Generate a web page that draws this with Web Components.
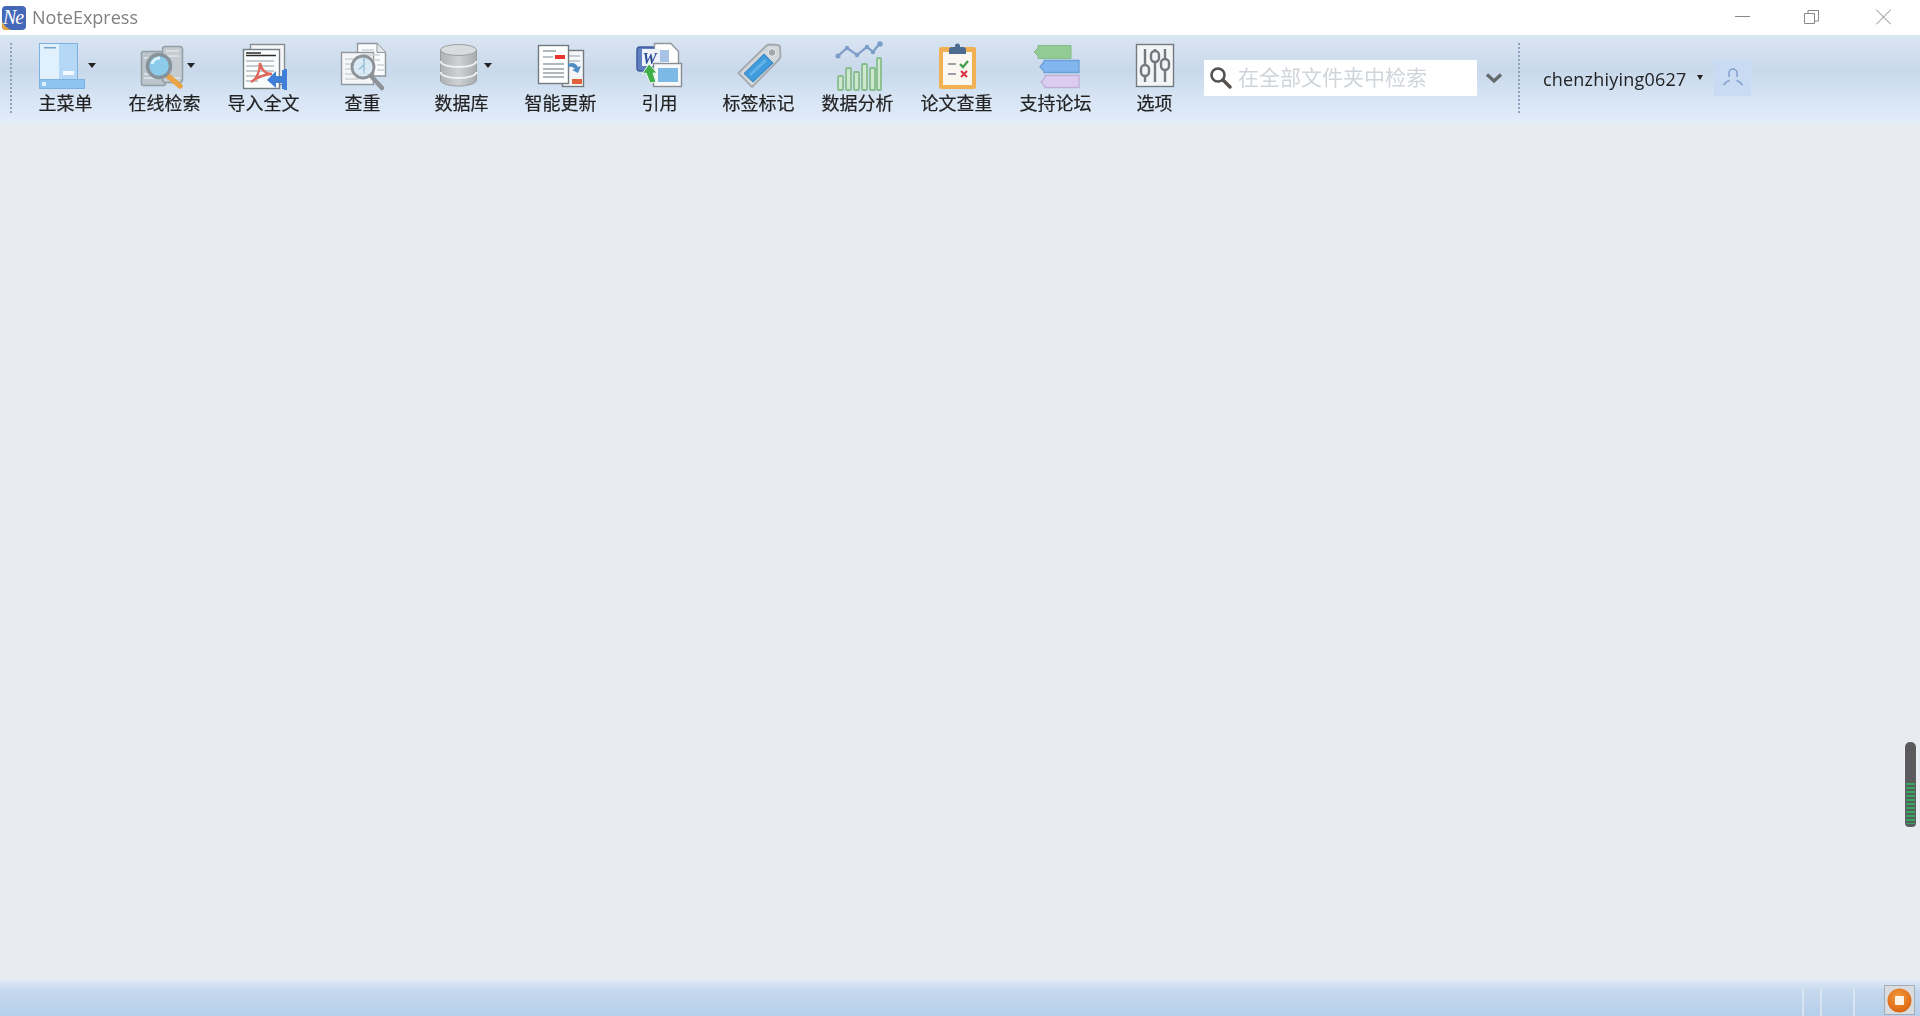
<!DOCTYPE html>
<html lang="zh">
<head>
<meta charset="utf-8">
<title>NoteExpress</title>
<style>
  html, body { margin: 0; height: 100%; }
  body { font-family: "Open Sans", "Noto Sans CJK SC", sans-serif; overflow: hidden; }
  ne-app { height: 1016px; }
  svg { display: block; }
</style>
</head>
<body>
<ne-app>
  <ne-titlebar slot="title" text="NoteExpress"></ne-titlebar>
  <ne-toolbar slot="tools">
    <ne-tool label="主菜单" caret>
      <svg viewBox="0 0 60 56" width="60" height="56">
        <rect x="3.500" y="5.500" width="38" height="37" fill="#b5d8f7" stroke="#7db2e0"/>
        <rect x="4" y="6" width="19" height="36" fill="#e0f0fd"/>
        <rect x="8" y="9" width="12" height="1.500" fill="#7aa4c8"/>
        <rect x="27" y="33" width="11" height="4" fill="#f2f9ff"/>
        <rect x="3.500" y="41.500" width="45" height="9" fill="#8ec4f0" stroke="#7db2e0"/>
        <rect x="6" y="44" width="4" height="4" fill="#dff0fd"/>
      </svg>
    </ne-tool>
    <ne-tool label="在线检索" caret>
      <svg viewBox="0 0 60 56" width="60" height="56">
        <rect x="6.500" y="13.500" width="24" height="34" rx="2" fill="#bcc5cb" stroke="#939da4" stroke-width="1.500"/>
        <rect x="27.500" y="8.500" width="20" height="36" rx="3" fill="#c4ccd2" stroke="#939da4" stroke-width="1.500"/>
        <path d="M31 13h13M31 18h13M37 40h8M9 20h8M9 40h14M9 36h6" stroke="#e0e5e8" stroke-width="1.500"/>
        <path d="M33 38l12 10" stroke="#e9a445" stroke-width="5.500" stroke-linecap="round"/>
        <circle cx="24" cy="28" r="11.500" fill="#8ccbea" stroke="#87929a" stroke-width="3.500"/>
        <path d="M17 26a8 8 0 0 1 8-6" stroke="#dcf3fc" stroke-width="3" fill="none"/>
      </svg>
    </ne-tool>
    <ne-tool label="导入全文">
      <svg viewBox="0 0 60 56" width="60" height="56">
        <rect x="16.500" y="6.500" width="34" height="40" fill="#f4f6f7" stroke="#868d93" stroke-width="1.400"/>
        <rect x="9.500" y="11.500" width="36" height="39" fill="#fbfcfc" stroke="#767d83" stroke-width="1.400"/>
        <path d="M12 15h15M12 17.500h30" stroke="#2b2b2b" stroke-width="1.500"/>
        <path d="M12 23h28M12 28h28M12 33h28M12 38h16M12 43h12" stroke="#b4bcc2" stroke-width="1.500"/>
        <path d="M17 44c6-3 9-11 9-19 1 7 6 11 12 11-6 0-14 3-21 8z" fill="none" stroke="#e0675c" stroke-width="2.400"/>
        <path d="M33 42l9-9v5h6v-6h2v-1h3v21h-3v-1h-2v-6h-6v5z" fill="#3f7fd8"/>
      </svg>
    </ne-tool>
    <ne-tool label="查重">
      <svg viewBox="0 0 60 56" width="60" height="56">
        <path d="M24.500 5.500H44l8.500 9V38h-28z" fill="#fafbfc" stroke="#8f969c" stroke-width="1.400"/>
        <path d="M44 5.500v9h8.500" fill="#e4e8eb" stroke="#8f969c"/>
        <rect x="8.500" y="14.500" width="32" height="32" fill="#f3f5f7" stroke="#8f969c" stroke-width="1.400"/>
        <path d="M12 21h25M12 26h25M12 31h25M12 36h25M12 41h14M29 12h12M29 17h18M29 22h18M44 27h7M44 32h7" stroke="#ccd2d6" stroke-width="1.300"/>
        <path d="M38 38l11 12" stroke="#8d9398" stroke-width="4.500" stroke-linecap="round"/>
        <circle cx="30" cy="29" r="11" fill="#d6e9f4" fill-opacity=".8" stroke="#8d9398" stroke-width="2.800"/>
        <path d="M31 20v15M26 31l5-4" stroke="#8ab8d4" stroke-width="1.200" fill="none"/>
      </svg>
    </ne-tool>
    <ne-tool label="数据库" caret>
      <svg viewBox="0 0 60 56" width="60" height="56">
        <defs><linearGradient id="db" x1="0" x2="1"><stop offset="0" stop-color="#aeb2b5"/><stop offset=".5" stop-color="#cfd2d4"/><stop offset="1" stop-color="#a8acaf"/></linearGradient></defs>
        <path d="M8.500 12v30c0 3.500 8 6 18 6s18-2.500 18-6V12z" fill="url(#db)" stroke="#9a9ea1"/>
        <ellipse cx="26.500" cy="12" rx="18" ry="5.500" fill="#d9dcde" stroke="#9a9ea1"/>
        <path d="M8.500 23c0 3.500 8 6 18 6s18-2.500 18-6M8.500 34c0 3.500 8 6 18 6s18-2.500 18-6" fill="none" stroke="#f0f1f2" stroke-width="1.800"/>
      </svg>
    </ne-tool>
    <ne-tool label="智能更新">
      <svg viewBox="0 0 60 56" width="60" height="56">
        <rect x="31.500" y="12.500" width="21" height="36" fill="#f4f6f8" stroke="#737b81" stroke-width="1.400"/>
        <rect x="41" y="41" width="10" height="5" fill="#e2603a"/>
        <path d="M35 18h14M35 23h14M35 28h8" stroke="#b8bfc5" stroke-width="1.300"/>
        <rect x="7.500" y="7.500" width="30" height="38" fill="#fff" stroke="#737b81" stroke-width="1.400"/>
        <path d="M12 13h13M12 26h21M12 31h21M12 35h21M12 39h21" stroke="#98a1a8" stroke-width="1.300"/>
        <path d="M12 19h10" stroke="#98a1a8" stroke-width="1.300"/>
        <rect x="24" y="17" width="10" height="4" fill="#e8362e"/>
        <path d="M37 26c4-2 8-1 10 3l3-1-3 7-6-3 3-1c-2-2-4-3-7-2z" fill="#4d8dc4"/>
      </svg>
    </ne-tool>
    <ne-tool label="引用">
      <svg viewBox="0 0 60 56" width="60" height="56">
        <rect x="7" y="9" width="26" height="24" rx="3" fill="#5f7fc0" stroke="#3f5c9e" stroke-width="1.500"/>
        <path d="M24.500 5.500H41l7.500 8V28h-24z" fill="#fff" stroke="#8f969c" stroke-width="1.400"/>
        <rect x="29" y="12" width="10" height="12" fill="#a7c4e6"/>
        <rect x="12" y="11" width="18" height="17" fill="#eef3fa"/>
        <text x="12.500" y="26" font-family="Liberation Serif, serif" font-style="italic" font-weight="700" font-size="16" fill="#2d4d96">W</text>
        <rect x="23.500" y="25.500" width="28" height="23" fill="#f5f7f9" stroke="#868d93" stroke-width="1.400"/>
        <rect x="28" y="30" width="20" height="14" fill="#7cb9e4"/>
        <path d="M19 26l8 9h-4l3 9-6 1-4-10-4 1z" fill="#3fae49" stroke="#e9f7ea"/>
      </svg>
    </ne-tool>
    <ne-tool label="标签标记">
      <svg viewBox="0 0 60 56" width="60" height="56">
        <path d="M9.500 35L37 8c1-1 2-1.500 3.500-1.500l8 .5c1.500 0 2.500 1 2.500 2.500l.5 9c0 1-.5 2-1.500 3L23 49z" fill="#d2d7db" stroke="#a3a9ae" stroke-width="1.800"/>
        <circle cx="43" cy="14.500" r="3.800" fill="#a0a6ab" stroke="#eef0f2"/>
        <path d="M15 35.500L35 16l9 9-20 19z" fill="#3f9bdc" stroke="#2f7fbc"/>
        <path d="M20 36l16-15 2 2-16 15z" fill="#62b3ea"/>
      </svg>
    </ne-tool>
    <ne-tool label="数据分析">
      <svg viewBox="0 0 60 56" width="60" height="56">
        <g fill="#cfe6cf" stroke="#86bd8c" stroke-width="1.800">
          <rect x="10" y="38" width="5" height="14" rx="1"/>
          <rect x="18" y="30" width="5" height="22" rx="1"/>
          <rect x="26" y="34" width="5" height="18" rx="1"/>
          <rect x="34" y="26" width="5" height="26" rx="1"/>
          <rect x="42" y="30" width="5" height="22" rx="1"/>
          <rect x="49" y="20" width="4" height="32" rx="1"/>
        </g>
        <path d="M10 18l9-8 10 7 10-8 6 5 7-9" fill="none" stroke="#7d9cc8" stroke-width="2.200"/>
        <g fill="#7d9cc8"><circle cx="10" cy="18" r="2.500"/><circle cx="19" cy="10" r="2.200"/><circle cx="29" cy="17" r="2.200"/><circle cx="39" cy="9" r="2.200"/><circle cx="45" cy="14" r="2.200"/><circle cx="52" cy="6" r="2.700"/></g>
      </svg>
    </ne-tool>
    <ne-tool label="论文查重">
      <svg viewBox="0 0 60 56" width="60" height="56">
        <rect x="12" y="9" width="37" height="42" rx="2" fill="#f1b053"/>
        <rect x="16" y="14" width="29" height="33" fill="#faf7f1"/>
        <path d="M22 11a3 3 0 0 1 3-2h3a3 3 0 0 1 5 0h3a3 3 0 0 1 3 2v5H22z" fill="#4d6a90"/>
        <circle cx="30.500" cy="8" r="2.500" fill="#4d6a90"/>
        <path d="M21 26h8M21 36h8" stroke="#9aa3aa" stroke-width="2"/>
        <path d="M33 26l3 3 5-6" fill="none" stroke="#3f9d4b" stroke-width="2.200"/>
        <path d="M34 33l6 6M40 33l-6 6" stroke="#d8384a" stroke-width="2.200"/>
      </svg>
    </ne-tool>
    <ne-tool label="支持论坛">
      <svg viewBox="0 0 60 56" width="60" height="56">
        <path d="M8 14l4-4V7.500h33v13H12V18z" fill="#93cb95" stroke="#84bb86"/>
        <path d="M14 29l4-5v-1.500h35v12H18V33z" fill="#82b6ee" stroke="#6a9fd8" stroke-width="1.300"/>
        <path d="M15 44l4-4v-2.500h34v12H19V48z" fill="#dcccf0" stroke="#bfb0d8" stroke-width="1.300"/>
      </svg>
    </ne-tool>
    <ne-tool label="选项">
      <svg viewBox="0 0 60 56" width="60" height="56">
        <rect x="11.500" y="6.500" width="37" height="42" fill="#f3f4f6" stroke="#737a80" stroke-width="1.400"/>
        <g fill="none" stroke="#72797f" stroke-width="2.400">
          <path d="M20 11v33M30 11v33M40 11v33"/>
          <rect x="16" y="27" width="8" height="11" rx="4" fill="#f3f4f6"/>
          <rect x="26" y="13" width="8" height="11" rx="4" fill="#f3f4f6"/>
          <rect x="36" y="21" width="8" height="11" rx="4" fill="#f3f4f6"/>
        </g>
      </svg>
    </ne-tool>
    <ne-search placeholder="在全部文件夹中检索"></ne-search>
    <ne-user name="chenzhiying0627"></ne-user>
  </ne-toolbar>
  <ne-statusbar slot="status"></ne-statusbar>
  <ne-meter slot="meter"></ne-meter>
</ne-app>

<script>
class NeApp extends HTMLElement {
  constructor() {
    super();
    this.attachShadow({ mode: 'open' }).innerHTML = `
      <style>
        :host { display: flex; flex-direction: column; position: relative; background: #e8ecf0; }
        main { flex: 1; }
      </style>
      <slot name="title"></slot>
      <slot name="tools"></slot>
      <main></main>
      <slot name="status"></slot>
      <slot name="meter"></slot>`;
  }
}

class NeTitlebar extends HTMLElement {
  connectedCallback() {
    this.attachShadow({ mode: 'open' }).innerHTML = `
      <style>
        :host { display: flex; align-items: center; height: 35px; background: #fff; color: #808080; font-size: 18px; padding-left: 2px; box-sizing: border-box; }
        .name { margin-left: 6px; flex: 1; line-height: 35px; filter: blur(.3px); }
        .win { display: flex; margin: -2px 29px 0 0; }
        .min { margin-right: 54px; }
        .max { margin-right: 57px; }
      </style>
      <svg width="24" height="24" viewBox="0 0 24 24">
        <rect width="24" height="24" rx="4" fill="#4567b8"/>
        <path d="M0 15c2 5 5 7 9 9H4a4 4 0 0 1-4-4z" fill="#e6a93c"/>
        <text x="1" y="18" font-family="Liberation Serif, serif" font-style="italic" font-size="20" letter-spacing="-1" fill="#fff">Ne</text>
      </svg>
      <span class="name">${this.getAttribute('text')}</span>
      <div class="win">
        <svg class="min" width="15" height="16" viewBox="0 0 15 16"><path d="M0 7.500h15" stroke="#888"/></svg>
        <svg class="max" width="15" height="16" viewBox="0 0 15 16"><path d="M.5 4.500h10v10H.5zM4 4.500V1.500h10.500V12h-4" fill="none" stroke="#888"/></svg>
        <svg width="15" height="16" viewBox="0 0 15 16"><path d="M0 .5l15 15M15 .5L0 15.500" stroke="#888"/></svg>
      </div>`;
  }
}

class NeToolbar extends HTMLElement {
  constructor() {
    super();
    this.attachShadow({ mode: 'open' }).innerHTML = `
      <style>
        :host { display: flex; height: 89px; box-sizing: border-box; padding-left: 16px; position: relative;
          background: linear-gradient(#dae5f2 0, #d0deee 20px, #c9d9eb 36px, #d5e3f3 60px, #e2edfa 89px); }
        .grip { position: absolute; left: 10px; top: 8px; height: 70px; border-left: 2px dotted #8ea2bb; }
      </style>
      <div class="grip"></div>
      <slot></slot>`;
  }
}

class NeTool extends HTMLElement {
  connectedCallback() {
    const caret = this.hasAttribute('caret') ? '<i class="caret"></i>' : '';
    this.attachShadow({ mode: 'open' }).innerHTML = `
      <style>
        :host { display: flex; flex-direction: column; align-items: center; width: 99px; flex: none; position: relative; padding-top: 3px; box-sizing: border-box; }
        .icon { height: 56px; filter: blur(.4px); }
        .label { font: 18px/26px "Noto Sans CJK SC", sans-serif; color: #222; margin-top: -5px; white-space: nowrap; -webkit-text-stroke: .2px #222; filter: blur(.3px); }
        .caret { position: absolute; left: 72px; top: 28px; border: 4px solid transparent; border-top: 5px solid #222; border-bottom: 0; }
      </style>
      <div class="icon"><slot></slot></div>
      <span class="label">${this.getAttribute('label')}</span>
      ${caret}`;
  }
}

class NeSearch extends HTMLElement {
  connectedCallback() {
    this.attachShadow({ mode: 'open' }).innerHTML = `
      <style>
        :host { display: flex; align-items: center; flex: none; height: 36px; margin-top: 25px; }
        .box { display: flex; align-items: center; width: 273px; height: 36px; background: #fff; padding-left: 5px; box-sizing: border-box; }
        .box svg { margin-top: -2px; }
        .ph { font: 21px/33px "Noto Sans CJK SC", sans-serif; color: #cfd5da; margin: -3px 0 0 6px; filter: blur(.3px); }
        .more { margin-left: 8px; }
      </style>
      <div class="box">
        <svg width="23" height="23" viewBox="0 0 23 23"><circle cx="9" cy="9" r="6.500" fill="none" stroke="#55514e" stroke-width="2.600"/><path d="M14 14l7 7" stroke="#55514e" stroke-width="3.400" stroke-linecap="round"/></svg>
        <span class="ph">${this.getAttribute('placeholder')}</span>
      </div>
      <svg class="more" width="18" height="12" viewBox="0 0 18 12"><path d="M2 2.500l7 6.500 7-6.500" fill="none" stroke="#646a6e" stroke-width="3.400"/></svg>`;
  }
}

class NeUser extends HTMLElement {
  connectedCallback() {
    this.attachShadow({ mode: 'open' }).innerHTML = `
      <style>
        :host { display: flex; align-items: flex-start; flex: none; position: relative; padding-left: 25px; margin-left: 15px; }
        .grip { position: absolute; left: 0; top: 8px; height: 70px; border-left: 2px dotted #8ea2bb; }
        .name { font: 18px/36px "Open Sans", sans-serif; color: #222; margin-top: 26px; letter-spacing: .2px; filter: blur(.3px); }
        .caret { border: 3.500px solid transparent; border-top: 5px solid #222; border-bottom: 0; margin: 40px 0 0 11px; }
        .avatar { width: 37px; height: 36px; margin: 25px 0 0 11px; background: #c8dbf3; display: flex; align-items: center; justify-content: center; }
      </style>
      <div class="grip"></div>
      <span class="name">${this.getAttribute('name')}</span>
      <i class="caret"></i>
      <div class="avatar">
        <svg width="22" height="22" viewBox="0 0 22 22" fill="none" stroke="#7f9fca" stroke-width="1.500"><path d="M7 10V6a4 4 0 0 1 8 0v4"/><path d="M1.500 18c2-3 4-4 6-4.500M20.500 18c-2-3-4-4-6-4.500"/></svg>
      </div>`;
  }
}

class NeStatusbar extends HTMLElement {
  constructor() {
    super();
    this.attachShadow({ mode: 'open' }).innerHTML = `
      <style>
        :host { display: flex; justify-content: flex-end; height: 36px; flex: none; padding-right: 5px; box-sizing: border-box;
          background: linear-gradient(#dfe9f5 0, #c4d7ee 12px, #b7cfea 36px); }
        .sep { width: 2px; height: 28px; margin-top: 8px; background: #d8e4f2; flex: none; }
        .btn { width: 31px; height: 30px; margin: 5px 0 1px 29px; box-sizing: border-box; border: 1px solid #a4adb6; background: #d9dde2; display: flex; align-items: center; justify-content: center; }
      </style>
      <i class="sep"></i><i class="sep" style="margin-left:16px"></i><i class="sep" style="margin-left:31px"></i>
      <div class="btn">
        <svg width="25" height="25" viewBox="0 0 25 25">
          <defs><radialGradient id="o" cx=".45" cy=".35" r=".7"><stop offset="0" stop-color="#f49a3c"/><stop offset="1" stop-color="#d9620f"/></radialGradient></defs>
          <circle cx="12.500" cy="12.500" r="12" fill="url(#o)"/>
          <rect x="8" y="8" width="9" height="9" rx="1" fill="#fff3e6"/>
        </svg>
      </div>`;
  }
}

class NeMeter extends HTMLElement {
  constructor() {
    super();
    this.attachShadow({ mode: 'open' }).innerHTML = `
      <style>
        :host { position: absolute; left: 1905px; top: 742px; width: 11px; height: 85px; border-radius: 5px 5px 4px 4px; overflow: hidden;
          background: #5b5b5d; box-shadow: 0 0 0 1px #eef1f4; }
        .lvl { position: absolute; left: 1px; right: 1px; top: 41px; bottom: 3px;
          background: repeating-linear-gradient(#35a85f 0 2px, #5b5b5d 2px 4px); }
      </style>
      <div class="lvl"></div>`;
  }
}

customElements.define('ne-app', NeApp);
customElements.define('ne-titlebar', NeTitlebar);
customElements.define('ne-toolbar', NeToolbar);
customElements.define('ne-tool', NeTool);
customElements.define('ne-search', NeSearch);
customElements.define('ne-user', NeUser);
customElements.define('ne-statusbar', NeStatusbar);
customElements.define('ne-meter', NeMeter);
</script>
</body>
</html>
